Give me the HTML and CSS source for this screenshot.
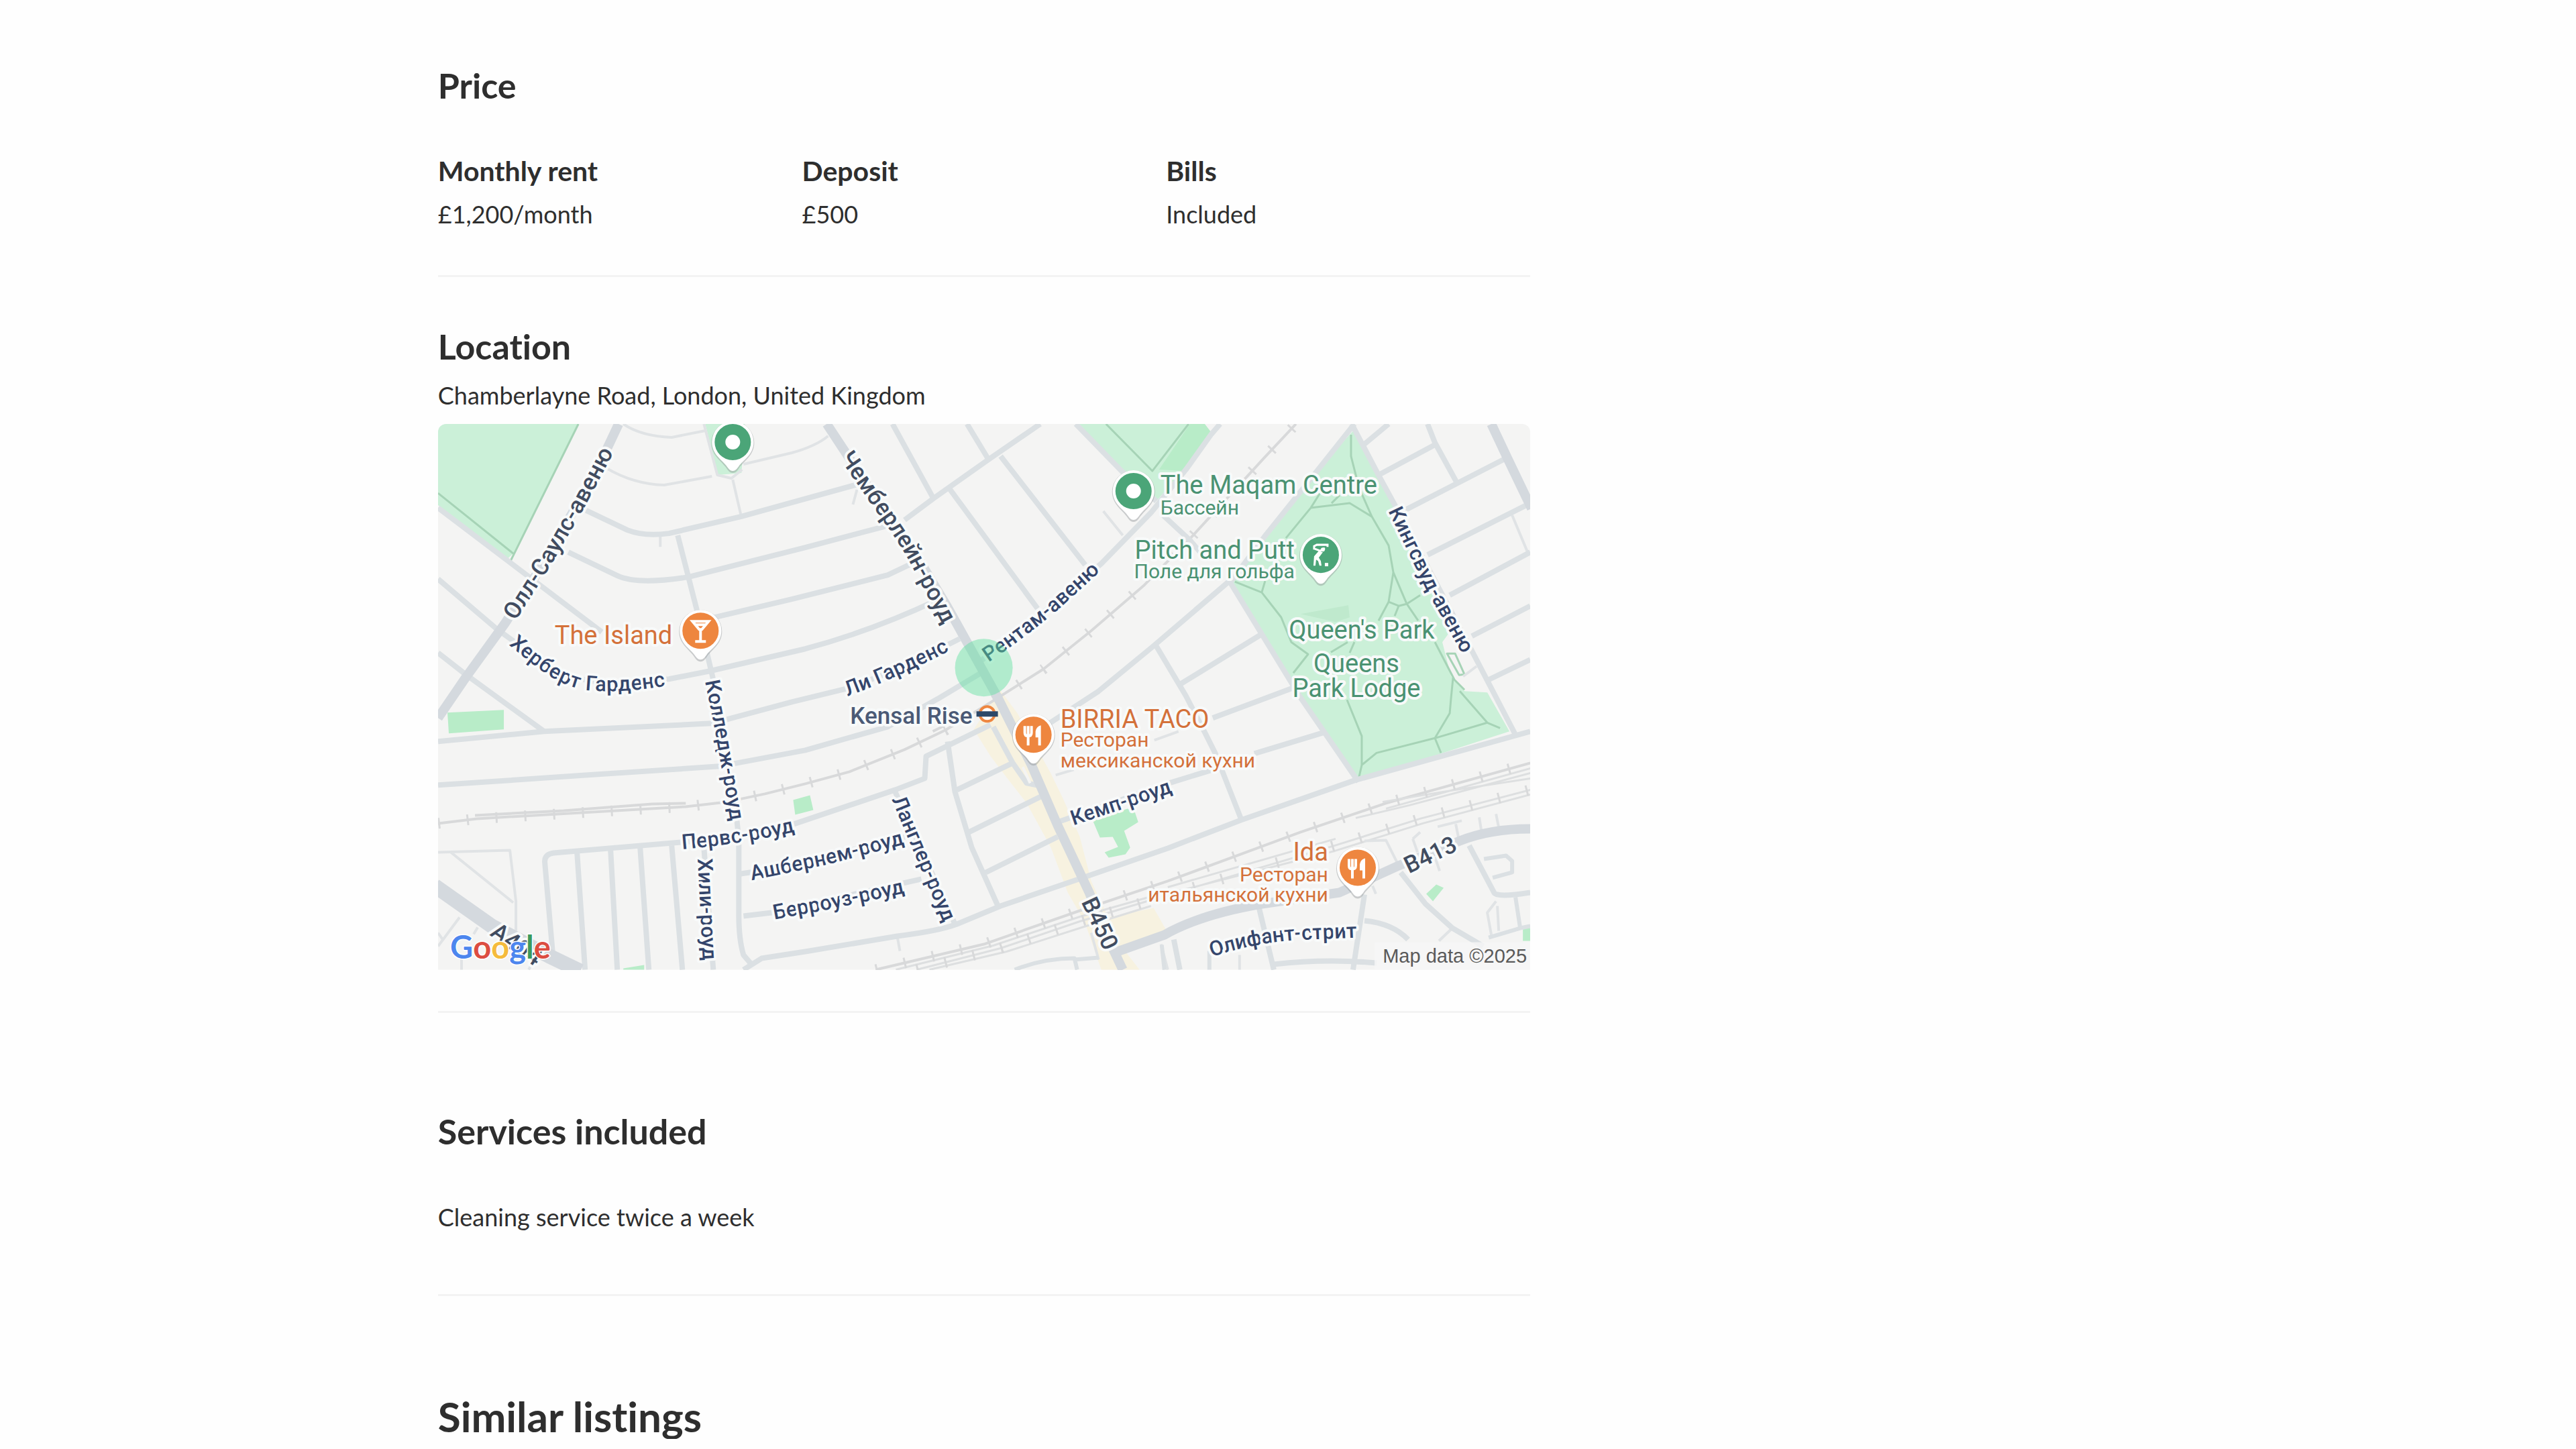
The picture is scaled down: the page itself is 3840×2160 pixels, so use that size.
FILE: index.html
```html
<!DOCTYPE html>
<html lang="en">
<head>
<meta charset="utf-8">
<meta name="viewport" content="width=device-width, initial-scale=1">
<title>Room on Chamberlayne Road</title>
<link rel="stylesheet" href="styles.css">
</head>
<body>
<main class="listing">
  <section class="section section-price">
    <h2 class="section-title">Price</h2>
    <dl class="facts">
      <div class="fact"><dt>Monthly rent</dt><dd>£1,200/month</dd></div>
      <div class="fact"><dt>Deposit</dt><dd>£500</dd></div>
      <div class="fact"><dt>Bills</dt><dd>Included</dd></div>
    </dl>
  </section>

  <section class="section section-location">
    <h2 class="section-title">Location</h2>
    <p class="address">Chamberlayne Road, London, United Kingdom</p>
    <svg class="map" viewBox="653 632 1627 813" role="img" aria-label="Map of Kensal Rise">
      <defs>
        <g id="pin">
          <path class="pin-shadow" d="M0 46C-5 46-7 42-10 38C-16 29-32 20-32 1A32 32 0 1 1 32 1C32 20 16 29 10 38C7 42 5 46 0 46Z"/>
          <path class="pin-body" d="M0 43C-4 43-6 40-9 36C-15 27-31 19-31 0A31 31 0 1 1 31 0C31 19 15 27 9 36C6 40 4 43 0 43Z"/>
          <circle r="27"/>
        </g>
        <g id="cutlery" class="glyph">
          <path d="M-13-13V-3Q-13 2-8 2Q-3 2-3-3V-13M-8-13V16"/>
          <path class="glyph-fill" d="M11-14V16H7V4H3V-5Q4-12 11-14Z"/>
        </g>
        <path id="l1" d="M747 937L808 841L861 750L914 650"/>
        <path id="l2" d="M757 946C795 975 830 1012 878 1018C915 1021 950 1018 1001 1010"/>
        <path id="l3" d="M1250 661L1309 746Q1345 795 1364 828L1424 942"/>
        <path id="l4" d="M1458 984Q1518 944 1571 899L1640 836"/>
        <path id="l5" d="M1247 1032Q1337 999 1421 954"/>
        <path id="l6" d="M2073 746L2133 870L2194 980"/>
        <path id="l7" d="M1060 1005L1077 1090L1101 1230"/>
        <path id="l8" d="M1008 1255Q1095 1249 1190 1227"/>
        <path id="l9" d="M1050 1268L1059 1442"/>
        <path id="l10" d="M1109 1303L1229 1278L1354 1245"/>
        <path id="l11" d="M1143 1361L1240 1343L1355 1318"/>
        <path id="l12" d="M1333 1173L1380 1285L1422 1385"/>
        <path id="l13" d="M1586 1223L1754 1167"/>
        <path id="l14" d="M1614 1322L1664 1430"/>
        <path id="l15" d="M2080 1298L2182 1249"/>
        <path id="l16" d="M1796 1418C1848 1399 1898 1391 1948 1389L2028 1386"/>
        <path id="l17" d="M710 1365L830 1449"/>
      </defs>

      <rect class="land" x="653" y="632" width="1627" height="813"/>
      <path class="shops" d="M1451 1087L1476 1127L1501 1160L1530 1197L1566 1263L1591 1330L1616 1373L1641 1445H1698L1673 1413L1740 1390L1719 1353L1651 1367L1626 1313L1609 1247L1584 1190L1566 1153L1516 1063L1490 1028Z"/>

      <g class="park">
        <path d="M653 632H862L765 825L756 833L653 753Z"/>
        <path d="M1051 632H1110L1105 705L1070 708Z"/>
        <path d="M1608 632H1795L1805 645L1767 697L1723 747L1673 700Z"/>
        <path d="M2018 640L2055 710L2085 765L2140 880L2165 935L2149 957L2162 1008L2182 1030L2216 1032L2249 1090L2024 1163L1938 1040L1833 868L1884 800L1964 700Z"/>
      </g>
      <g class="green">
        <path d="M1773 632H1795L1805 645L1763 702L1727 700Z"/>
        <path d="M667 1062L751 1058V1087L669 1093Z"/>
        <path d="M1182 1192L1207 1185L1212 1207L1185 1214Z"/>
        <path d="M929 1443L960 1438V1445H929Z"/>
        <path d="M1628 1222L1680 1205L1691 1210L1696 1225L1675 1238L1684 1263L1677 1273L1652 1278L1646 1270L1666 1262L1658 1247L1639 1248Z"/>
        <path d="M2125 1332L2140 1318L2151 1323L2135 1343Z"/>
        <path d="M2269 1383H2280V1402H2269Z"/>
        <path class="pitch" d="M1938 915L2009 902L2011 920L1990 927Z"/>
      </g>
      <g class="footpath">
        <path d="M862 632L760 838M653 735L765 825"/>
        <path d="M1648 632L1717 702L1771 632"/>
        <path d="M2013 648V680L2025 727L2044 770L2069 813L2076 853L2096 900L2113 925M2076 853L2069 897L2084 903L2096 900L2116 887M2069 897L2054 925M2084 903L2078 918"/>
        <path d="M1916 802L1953 757L2011 750L2044 770M1953 757L1970 730M1984 750L1996 738"/>
        <path d="M1840 867L1880 883L1909 920L1924 957L1949 975L1927 1003M1880 883L1885 866M2018 957L2011 973M1983 972L2008 957"/>
        <path d="M2138 957L2167 1013L2182 1028M2175 1030L2216 1077L2235 1085M2165 1010L2162 1040L2160 1063L2138 1100L2147 1122M2216 1077L2138 1100L2051 1122L2029 1140L2024 1162M2007 1043L2029 1097V1140M2156 974L2168 974L2182 1005L2174 1006Z"/>
      </g>

      <g class="rail">
        <path d="M653 1227L711 1220L883 1210L1022 1202L1083 1195L1140 1183L1200 1168L1266 1150L1348 1117L1409 1088L1471 1050L1555 997L1626 940L1705 872L1773 803L1884 682L1931 632"/>
        <path d="M708 1215L840 1208L972 1198L1022 1197M1390 1090L1420 1075"/>
        <path d="M1305 1445L1466 1407L1609 1357L1740 1313L1938 1240L2065 1197L2280 1137"/>
        <path class="rail-thin" d="M1335 1445L1480 1409L1609 1366L1715 1336M1366 1445L1491 1413L1609 1373L1709 1343L1989 1260L2116 1220L2280 1177M1385 1445L1500 1418L1612 1382L1715 1350M1720 1337L1989 1268L2120 1227L2280 1184M1740 1322L1990 1250M2020 1219L2100 1200L2280 1152M2065 1205L2280 1145M2060 1195L2150 1180L2280 1160"/>
        <path class="ties" d="M653 1227L711 1220L883 1210L1022 1202L1083 1195L1140 1183L1200 1168L1266 1150L1348 1117L1409 1088L1471 1050L1555 997L1626 940L1705 872L1773 803L1884 682L1931 632"/>
        <path class="ties" d="M1305 1445L1466 1407L1609 1357L1740 1313L1938 1240L2065 1197L2280 1137M1366 1445L1491 1413L1609 1373L1709 1343L1989 1260L2116 1220L2280 1177"/>
      </g>

      <g class="lane">
        <path d="M929 632Q955 650 1001 652L1051 642M904 698Q945 722 990 723L1061 710M1108 692L1180 675Q1216 665 1234 650M1049 632L1069 708L1090 713L1106 700M1092 715L1104 767M984 797V815M1644 762L1673 798M1277 730L1271 752"/>
        <path d="M2253 768L2276 823M2180 1008L2200 993M1720 1103L1756 1090M1573 1155L1600 1147M1337 1395L1341 1417"/>
        <path d="M653 1270L760 1267L769 1343V1387M672 1270L765 1345M653 1410L685 1367M653 1390L660 1400M688 1445V1430M788 1445L795 1432M706 1392L712 1382"/>
        <path d="M1626 1390L1637 1430M1730 1407L1740 1445M1847 1423V1445M2033 1253L2065 1252L2084 1290M2105 1250L2116 1240M2105 1250L2112 1270M2142 1232L2178 1223M2169 1228L2174 1253M2204 1218L2207 1237M2229 1213L2233 1233M2138 1277L2145 1298M2045 1320L2050 1332"/>
        <path d="M2229 1343L2216 1360L2222 1393M2231 1350L2233 1387M2144 1402L2164 1383"/>
      </g>

      <g class="road">
        <path d="M653 757L897 942M653 863L740 937L813 990Q850 1018 933 1018L997 1012L1058 1000L1200 967Q1300 940 1395 895M653 973L694 1005L811 1090"/>
        <path d="M872 760L935 790Q960 800 997 795L1104 770L1285 720M847 823L920 858Q950 872 1026 860L1200 816L1340 779M1040 926L1180 893L1323 857L1365 837"/>
        <path d="M1010 798L1038 907L1063 1013L1077 1090L1097 1212L1101 1250V1363Q1101 1400 1108 1423L1120 1437"/>
        <path d="M653 1105L811 1090L1061 1078L1180 1046L1262 1026L1340 997L1430 952M653 1170L876 1155L1072 1142L1200 1118L1323 1083L1400 1040L1460 1004"/>
        <path d="M1330 632L1391 743M1441 632L1473 685M1348 775L1391 743L1473 685L1550 632M1416 730L1546 907M1491 680L1617 842M1603 632L1671 702L1723 747"/>
        <path d="M1455 990L1573 898L1641 840L1716 763L1767 700L1805 647L1818 632M1733 768L1773 805L1790 825"/>
        <path d="M1565 1077L1637 1030L1716 965L1833 865M1720 958L1767 1037L1796 1093L1811 1123L1849 1220M1758 1020L1880 945M1807 1070L1935 1022M1869 1123L1971 1092M1576 1225L1742 1167L1807 1147"/>
        <path d="M2018 632L1964 700L1884 800L1833 868L1938 1040L2024 1165M2014 632L2055 710L2085 765L2193 970L2258 1095"/>
        <path d="M1108 1445L1135 1428L1200 1418L1337 1395Q1400 1387 1426 1377L1491 1350L1616 1307L1740 1264L1849 1222L2018 1163L2280 1090"/>
        <path d="M2127 632L2138 660L2171 720M2033 662L2069 632M2056 707L2138 663M2094 760L2244 683M2127 827L2280 750M2160 887L2280 823M2193 948L2280 903M2218 1013L2280 983"/>
        <path d="M1183 1228Q1097 1250 1015 1255L825 1271Q811 1273 812 1285L824 1423M1183 1228L1334 1177L1378 1160L1380 1127L1476 1080"/>
        <path d="M860 1270L872 1445M910 1267L920 1445M954 1263L967 1445M1001 1260L1017 1445M1049 1263L1063 1445M1104 1302L1131 1298L1334 1252L1360 1243M1108 1365L1150 1360L1373 1310"/>
        <path d="M1412 1105L1423 1180L1448 1263L1487 1350M1426 1177L1509 1137M1444 1240L1551 1187M1469 1300L1576 1247M1480 1083L1509 1137L1530 1167L1545 1170M1334 1180L1423 1377"/>
        <path d="M1876 1353L1898 1445M2033 1333L2016 1445M1898 1437Q1975 1428 2051 1435M2033 1372Q2075 1376 2098 1400M2087 1300L2124 1347L2164 1383L2210 1410M2189 1260L2226 1330Q2230 1338 2280 1330M1749 1400L1758 1445"/>
        <path class="narrow" d="M2211 1280L2244 1275L2253 1283V1300L2224 1308M2258 1337L2265 1383M2218 1397L2265 1383L2280 1380M1512 1445Q1555 1428 1601 1428L1605 1445M1601 1430L1637 1427M1731 1408L1735 1445M1802 1417V1445"/>
      </g>
      <g class="main-road">
        <path d="M922 632L890 700L808 843L752 930L694 1010L653 1070M2222 632L2246 683L2282 758"/>
        <path d="M1232 632L1267 685L1309 748L1362 822L1412 905L1487 1040L1537 1140L1576 1230L1623 1330L1655 1407L1673 1445"/>
        <path d="M1659 1420L1735 1393Q1790 1362 1880 1347L1996 1330L2084 1290L2175 1253Q2220 1235 2280 1235"/>
        <path class="trunk" d="M648 1320L733 1380L819 1425L865 1447"/>
      </g>
      <path class="median" d="M1524 1143L1535 1167"/>

      <g class="street">
        <text dy="11"><textPath href="#l2" startOffset="50%">Херберт Гарденс</textPath></text>
        <text dy="11"><textPath href="#l4" startOffset="50%">Рентам-авеню</textPath></text>
        <text dy="11"><textPath href="#l5" startOffset="50%">Ли Гарденс</textPath></text>
        <text dy="11"><textPath href="#l6" startOffset="50%">Кингсвуд-авеню</textPath></text>
        <text dy="11"><textPath href="#l7" startOffset="50%">Колледж-роуд</textPath></text>
        <text dy="11"><textPath href="#l8" startOffset="50%">Первс-роуд</textPath></text>
        <text dy="11"><textPath href="#l9" startOffset="50%">Хили-роуд</textPath></text>
        <text dy="11"><textPath href="#l10" startOffset="50%">Ашбернем-роуд</textPath></text>
        <text dy="11"><textPath href="#l11" startOffset="50%">Берроуз-роуд</textPath></text>
        <text dy="11"><textPath href="#l12" startOffset="50%">Ланглер-роуд</textPath></text>
        <text dy="11"><textPath href="#l13" startOffset="50%">Кемп-роуд</textPath></text>
        <text dy="11"><textPath href="#l16" startOffset="50%">Олифант-стрит</textPath></text>
      </g>
      <g class="street street-main">
        <text dy="12"><textPath href="#l1" startOffset="50%">Олл-Саулс-авеню</textPath></text>
        <text dy="12"><textPath href="#l3" startOffset="50%">Чемберлейн-роуд</textPath></text>
        <text dy="12"><textPath href="#l14" startOffset="50%">B450</textPath></text>
        <text dy="12"><textPath href="#l15" startOffset="50%">B413</textPath></text>
        <text dy="12"><textPath href="#l17" startOffset="50%">A404</textPath></text>
      </g>

      <circle class="area" cx="1466" cy="995" r="43"/>

      <g class="place food">
        <text class="name end" x="1002" y="960">The Island</text>
        <text class="name" x="1580" y="1085">BIRRIA TACO</text>
        <text x="1580" y="1113">Ресторан</text>
        <text x="1580" y="1144">мексиканской кухни</text>
        <text class="name end" x="1979" y="1283">Ida</text>
        <text class="end" x="1979" y="1314">Ресторан</text>
        <text class="end" x="1979" y="1344">итальянской кухни</text>
      </g>
      <g class="place leisure">
        <text class="name" x="1729" y="736">The Maqam Centre</text>
        <text x="1729" y="767">Бассейн</text>
        <text class="name end" x="1929" y="833">Pitch and Putt</text>
        <text class="end" x="1929" y="862">Поле для гольфа</text>
        <text class="name mid" x="2029" y="952">Queen's Park</text>
        <text class="name mid" x="2021" y="1002">Queens</text>
        <text class="name mid" x="2021" y="1039">Park Lodge</text>
      </g>
      <g class="place station">
        <text class="name end" x="1449" y="1079">Kensal Rise</text>
        <circle cx="1471" cy="1064" r="11"/>
        <rect x="1455" y="1060" width="32" height="8"/>
      </g>

      <g class="pin-green">
        <g transform="translate(1092 659)"><use href="#pin"/><circle class="dot" r="11"/></g>
        <g transform="translate(1689 732)"><use href="#pin"/><circle class="dot" r="11"/></g>
        <g transform="translate(1968 827)"><use href="#pin"/>
          <g class="glyph">
            <path class="club" d="M-10-8V-13L-6-15H10V-12"/>
            <path class="club" d="M-9-9L-1-6L6-10"/>
            <circle class="glyph-fill" cx="3" cy="-8" r="3"/>
            <path class="glyph-fill" d="M-3-6L3-4L-3 4L0 9L1 16H-2L-4 9L-7 7L-8 16H-11L-10 2Z"/>
            <path class="glyph-fill" d="M6 12H11V17H6Z"/>
          </g>
        </g>
      </g>
      <g class="pin-orange">
        <g transform="translate(1044 940)"><use href="#pin"/>
          <path class="glyph" d="M-12-14H12L2-2H-2ZM-9-9H9M0-2V16M-8 16H8"/>
        </g>
        <g transform="translate(1540 1095)"><use href="#pin"/><use href="#cutlery"/></g>
        <g transform="translate(2023 1293)"><use href="#pin"/><use href="#cutlery"/></g>
      </g>

      <text class="brand" x="671" y="1428"><tspan class="g-blue">G</tspan><tspan class="g-red">o</tspan><tspan class="g-yellow">o</tspan><tspan class="g-blue">g</tspan><tspan class="g-green">l</tspan><tspan class="g-red">e</tspan></text>
      <rect class="credit-bg" x="2048" y="1404" width="232" height="41"/>
      <text class="credit" x="2275" y="1434">Map data ©2025</text>
    </svg>
  </section>

  <section class="section section-services">
    <h2 class="section-title">Services included</h2>
    <p class="service">Cleaning service twice a week</p>
  </section>

  <section class="similar">
    <h2 class="similar-title">Similar listings</h2>
  </section>
</main>
</body>
</html>
```
FILE: styles.css
```css
* { box-sizing: border-box; }

body {
  margin: 0;
  background: #fefefe;
  color: #2e2e2e;
  font-family: Lato, "Open Sans", sans-serif;
  font-size: 36px;
  line-height: 44px;
  font-variant-ligatures: none;
}

h2, p, dl, dd { margin: 0; }

.listing {
  width: 42.4%;
  margin-left: 17%;
  padding-top: 97px;
}

.section { border-bottom: 3px solid #f3f3f3; }

.section-title {
  font-size: 52px;
  line-height: 60px;
  font-weight: 700;
}

.section-price { padding-bottom: 69px; }

.facts {
  display: grid;
  grid-template-columns: repeat(3, 1fr);
  margin-top: 74px;
}

.fact dt {
  margin-bottom: 18px;
  font-size: 41px;
  line-height: 48px;
  font-weight: 700;
}

.section-location { padding: 73px 0 61px; }

.address { margin: 21px 0; }

.map {
  display: block;
  width: 100%;
  height: auto;
  border-radius: 12px 12px 0 0;
  font-family: Roboto, "Noto Sans", sans-serif;
}

.section-services { padding: 146px 0 93px; }

.service { margin-top: 76px; }

.similar { padding-top: 145px; }

.similar-title {
  font-size: 62px;
  line-height: 68px;
  font-weight: 700;
}

/* Map surfaces */
.land { fill: #f4f4f3; }
.shops { fill: #f7f2e0; }
.park { fill: #cbf0d8; }
.green { fill: #b8ecc8; }
.pitch { fill: #bfe9cd; }

/* Map lines */
.footpath, .rail, .lane, .road, .main-road, .median {
  fill: none;
  stroke-linejoin: round;
}
.footpath { stroke: #a6d3b6; stroke-width: 3; }
.rail { stroke: #d8d9da; stroke-width: 4; }
.rail-thin { stroke: #dddfe0; stroke-width: 3; }
.ties { stroke-width: 16; stroke-dasharray: 3 40; }
.lane { stroke: #e0e3e5; stroke-width: 4; }
.road { stroke: #dbe0e3; stroke-width: 8; }
.narrow { stroke-width: 6; }
.main-road { stroke: #d4d9de; stroke-width: 14; }
.trunk { stroke-width: 22; }
.median { stroke: #f4f4f3; stroke-width: 4; }
.area { fill: #5fe0a0; fill-opacity: .45; }

/* Map labels */
.street text, .place text {
  stroke: #f8fafa;
  stroke-width: 8px;
  stroke-linejoin: round;
  paint-order: stroke;
}
.street {
  fill: #34456b;
  font-size: 31px;
  font-weight: 500;
  text-anchor: middle;
}
.street-main { fill: #414c60; font-size: 35px; }
.place { font-size: 30px; }
.place .name { font-size: 38px; }
.place .end { text-anchor: end; }
.place .mid { text-anchor: middle; }
.food { fill: #d4713a; }
.leisure { fill: #4a9272; }
.station text { fill: #4b5a76; font-weight: 500; }
.station .name { font-size: 35px; }
.station circle { fill: #fff; stroke: #ee8640; stroke-width: 4; }
.station rect { fill: #2d4868; }

/* Map pins */
.pin-shadow { fill: #8a8f92; fill-opacity: .4; }
.pin-body { fill: #fff; }
.pin-green { fill: #4ba578; }
.pin-orange { fill: #ee863f; }
.dot { fill: #fff; }
.glyph { fill: none; stroke: #fff; stroke-width: 4; }
.club { stroke-width: 3; }
.glyph-fill { fill: #fff; stroke: none; }

.brand {
  font-family: Lato, sans-serif;
  font-size: 47px;
  font-weight: 700;
  stroke: #fff;
  stroke-width: 3px;
  paint-order: stroke;
}
.g-blue { fill: #4d86ee; }
.g-red { fill: #dc4d41; }
.g-yellow { fill: #f5bb3c; }
.g-green { fill: #3b9a5b; }
.credit-bg { fill: #f6f6f6; fill-opacity: .8; }
.credit {
  fill: #5a5a5a;
  font-family: "Liberation Sans", Arial, sans-serif;
  font-size: 29px;
  text-anchor: end;
}
```
